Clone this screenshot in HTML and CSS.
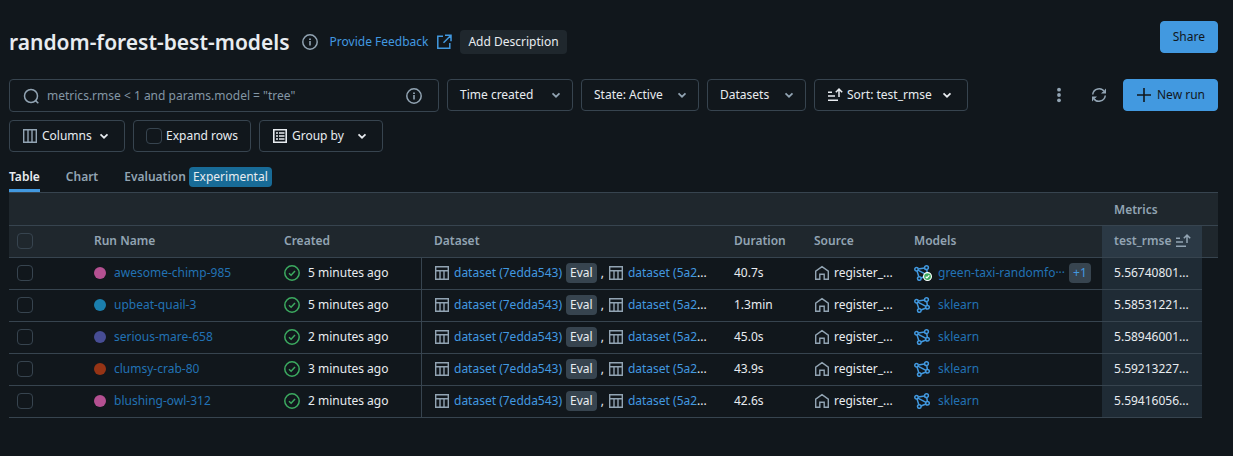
FILE: index.html
```html
<!DOCTYPE html>
<html lang="en">
<head>
<meta charset="utf-8">
<title>random-forest-best-models</title>
<link rel="stylesheet" href="styles.css">
</head>
<body>
<svg class="sprite" aria-hidden="true">
  <symbol id="info" viewBox="0 0 16 16"><circle cx="8" cy="8" r="7.2" fill="none" stroke="currentColor" stroke-width="1.5"/><path d="M7.2 7h1.6v4.5H7.2zM7.1 4.4h1.8v1.6H7.1z" fill="currentColor"/></symbol>
  <symbol id="external" viewBox="0 0 16 16"><path d="M7 2.2H1.8v12h12V9M9 1.2h6v6M15 1.2L7.5 8.7" fill="none" stroke="currentColor" stroke-width="1.5"/></symbol>
  <symbol id="search" viewBox="0 0 16 16"><circle cx="8" cy="8" r="6.5" fill="none" stroke="currentColor" stroke-width="1.5"/><path d="M12.4 12.4L15.3 15.3" stroke="currentColor" stroke-width="1.5"/></symbol>
  <symbol id="chevron" viewBox="0 0 16 16"><path d="M4.5 6.3L8 9.7l3.500-3.400" fill="none" stroke="currentColor" stroke-width="1.7"/></symbol>
  <symbol id="sort" viewBox="0 0 16 16"><path d="M1 5.200h4M1 9h7M1 13.300h10M12 10V2.200M8.800 5.300L12 2.100l3.200 3.200" fill="none" stroke="currentColor" stroke-width="1.5"/></symbol>
  <symbol id="columns" viewBox="0 0 16 16"><path d="M1.700 1.700h12.600v12.600H1.700zM6 1.700v12.600M10 1.700v12.600" fill="none" stroke="currentColor" stroke-width="1.400"/></symbol>
  <symbol id="list" viewBox="0 0 16 16"><path d="M1.800 1.800h12.400v12.400H1.800z" fill="none" stroke="currentColor" stroke-width="1.600"/><path d="M4 5h2M7 5h5.500M4 8h2M7 8h5.500M4 11h2M7 11h5.500" stroke="currentColor" stroke-width="1.500"/></symbol>
  <symbol id="dots" viewBox="0 0 16 16"><circle cx="8" cy="2.700" r="1.900" fill="currentColor"/><circle cx="8" cy="8" r="1.900" fill="currentColor"/><circle cx="8" cy="13.300" r="1.900" fill="currentColor"/></symbol>
  <symbol id="refresh" viewBox="0 0 16 16"><path d="M1.700 7.500A6.400 6.400 0 0 1 13.600 5M14.300 8.500A6.400 6.400 0 0 1 2.400 11" fill="none" stroke="currentColor" stroke-width="1.500"/><path d="M15 1.500v5h-5l1.500-1.500h2V3zM1 14.500v-5h5L4.500 11h-2v2z" fill="currentColor"/></symbol>
  <symbol id="plus" viewBox="0 0 16 16"><path d="M8 1v14M1 8h14" stroke="currentColor" stroke-width="1.600"/></symbol>
  <symbol id="check" viewBox="0 0 16 16"><circle cx="8" cy="8" r="7.200" fill="none" stroke="currentColor" stroke-width="1.500"/><path d="M5 8.200l2.100 2L11 6" fill="none" stroke="currentColor" stroke-width="1.500"/></symbol>
  <symbol id="table" viewBox="0 0 16 16"><path d="M1.700 1.700h12.600v12.600H1.700zM1.700 5.700h12.600M6 5.700v8.600M10 5.700v8.600" fill="none" stroke="currentColor" stroke-width="1.400"/></symbol>
  <symbol id="home" viewBox="0 0 16 16"><path d="M1.700 14.300V6.200L8 1.600l6.300 4.600v8.100H10.200V9.200H5.800v5.100z" fill="none" stroke="currentColor" stroke-width="1.400"/></symbol>
  <symbol id="model" viewBox="0 0 16 16"><g fill="none" stroke="currentColor" stroke-width="1.500"><circle cx="2.500" cy="4.200" r="1.700"/><circle cx="12.500" cy="2.700" r="1.900"/><circle cx="13.500" cy="10.200" r="1.800"/><circle cx="5.300" cy="13.500" r="1.800"/><path d="M4.200 4l6.400-1M12.800 4.600l.500 3.800M3.900 5.200l8.100 4.200M3 5.900l1.800 5.900M7 13l4.900-2"/></g></symbol>
</svg>

<main class="page">
  <header class="header">
    <h1 class="title">random-forest-best-models</h1>
    <svg class="icon muted"><use href="#info"/></svg>
    <a class="feedback" href="#">Provide Feedback <svg class="icon"><use href="#external"/></svg></a>
    <button class="describe">Add Description</button>
    <button class="btn primary share">Share</button>
  </header>

  <div class="toolbar">
    <div class="filters">
      <label class="search">
        <svg class="icon muted"><use href="#search"/></svg>
        <input type="text" aria-label="Search runs" placeholder='metrics.rmse &lt; 1 and params.model = "tree"'>
        <svg class="icon muted"><use href="#info"/></svg>
      </label>
      <button class="btn time">Time created <svg class="icon muted"><use href="#chevron"/></svg></button>
      <button class="btn state">State: Active <svg class="icon muted"><use href="#chevron"/></svg></button>
      <button class="btn datasets">Datasets <svg class="icon muted"><use href="#chevron"/></svg></button>
      <button class="btn sort"><svg class="icon"><use href="#sort"/></svg><span class="grow">Sort: test_rmse</span><svg class="icon"><use href="#chevron"/></svg></button>
      <button class="btn cols"><svg class="icon muted"><use href="#columns"/></svg><span class="grow">Columns</span><svg class="icon"><use href="#chevron"/></svg></button>
      <label class="btn expand"><input class="tick" type="checkbox"><span>Expand rows</span></label>
      <button class="btn group"><svg class="icon"><use href="#list"/></svg><span class="grow">Group by</span><svg class="icon"><use href="#chevron"/></svg></button>
    </div>
    <div class="actions">
      <button class="bare" aria-label="More"><svg class="icon"><use href="#dots"/></svg></button>
      <button class="bare" aria-label="Refresh"><svg class="icon"><use href="#refresh"/></svg></button>
      <button class="btn primary new"><svg class="icon"><use href="#plus"/></svg>New run</button>
    </div>
  </div>

  <nav class="tabs">
    <a class="tab active" href="#">Table</a>
    <a class="tab" href="#">Chart</a>
    <a class="tab" href="#">Evaluation <span class="badge">Experimental</span></a>
  </nav>

  <table class="runs">
    <colgroup><col class="c-check"><col class="c-name"><col class="c-created"><col class="c-dataset"><col class="c-duration"><col class="c-source"><col class="c-models"><col class="c-metric"><col></colgroup>
    <thead>
      <tr class="groups"><th colspan="7"></th><th colspan="2">Metrics</th></tr>
      <tr>
        <th class="pick"><input class="tick" type="checkbox" aria-label="Select all"></th>
        <th>Run Name</th><th>Created</th><th>Dataset</th><th>Duration</th><th>Source</th><th>Models</th>
        <th class="metric"><span class="cell sorted">test_rmse <svg class="icon"><use href="#sort"/></svg></span></th><th></th>
      </tr>
    </thead>
    <tbody>
      <tr>
        <td class="pick"><input class="tick" type="checkbox" aria-label="Select awesome-chimp-985"></td>
        <td><span class="cell name"><i class="dot pink"></i><a href="#">awesome-chimp-985</a></span></td>
        <td class="created"><span class="cell"><svg class="icon ok"><use href="#check"/></svg>5 minutes ago</span></td>
        <td><span class="cell data"><svg class="icon muted"><use href="#table"/></svg><a href="#">dataset (7edda543)</a><b class="tag">Eval</b><span>,</span><svg class="icon muted"><use href="#table"/></svg><span><a href="#">dataset (5a2</a>...</span></span></td>
        <td>40.7s</td>
        <td><span class="cell source"><svg class="icon muted"><use href="#home"/></svg>register_...</span></td>
        <td><span class="cell model"><span class="mark"><svg class="icon"><use href="#model"/></svg><svg class="seal" viewBox="0 0 8 8"><circle cx="4" cy="4" r="3.500" fill="#3caa60" stroke="#fff"/><path d="M2.400 4.200l1.100 1 2.100-2.300" fill="none" stroke="#fff"/></svg></span><a href="#">green-taxi-randomfo···</a><button class="more">+1</button></span></td>
        <td class="metric">5.56740801...</td><td class="rest"></td>
      </tr>
      <tr>
        <td class="pick"><input class="tick" type="checkbox" aria-label="Select upbeat-quail-3"></td>
        <td><span class="cell name"><i class="dot teal"></i><a href="#">upbeat-quail-3</a></span></td>
        <td class="created"><span class="cell"><svg class="icon ok"><use href="#check"/></svg>5 minutes ago</span></td>
        <td><span class="cell data"><svg class="icon muted"><use href="#table"/></svg><a href="#">dataset (7edda543)</a><b class="tag">Eval</b><span>,</span><svg class="icon muted"><use href="#table"/></svg><span><a href="#">dataset (5a2</a>...</span></span></td>
        <td>1.3min</td>
        <td><span class="cell source"><svg class="icon muted"><use href="#home"/></svg>register_...</span></td>
        <td><span class="cell model"><svg class="icon"><use href="#model"/></svg><a href="#">sklearn</a></span></td>
        <td class="metric">5.58531221...</td><td class="rest"></td>
      </tr>
      <tr>
        <td class="pick"><input class="tick" type="checkbox" aria-label="Select serious-mare-658"></td>
        <td><span class="cell name"><i class="dot indigo"></i><a href="#">serious-mare-658</a></span></td>
        <td class="created"><span class="cell"><svg class="icon ok"><use href="#check"/></svg>2 minutes ago</span></td>
        <td><span class="cell data"><svg class="icon muted"><use href="#table"/></svg><a href="#">dataset (7edda543)</a><b class="tag">Eval</b><span>,</span><svg class="icon muted"><use href="#table"/></svg><span><a href="#">dataset (5a2</a>...</span></span></td>
        <td>45.0s</td>
        <td><span class="cell source"><svg class="icon muted"><use href="#home"/></svg>register_...</span></td>
        <td><span class="cell model"><svg class="icon"><use href="#model"/></svg><a href="#">sklearn</a></span></td>
        <td class="metric">5.58946001...</td><td class="rest"></td>
      </tr>
      <tr>
        <td class="pick"><input class="tick" type="checkbox" aria-label="Select clumsy-crab-80"></td>
        <td><span class="cell name"><i class="dot rust"></i><a href="#">clumsy-crab-80</a></span></td>
        <td class="created"><span class="cell"><svg class="icon ok"><use href="#check"/></svg>3 minutes ago</span></td>
        <td><span class="cell data"><svg class="icon muted"><use href="#table"/></svg><a href="#">dataset (7edda543)</a><b class="tag">Eval</b><span>,</span><svg class="icon muted"><use href="#table"/></svg><span><a href="#">dataset (5a2</a>...</span></span></td>
        <td>43.9s</td>
        <td><span class="cell source"><svg class="icon muted"><use href="#home"/></svg>register_...</span></td>
        <td><span class="cell model"><svg class="icon"><use href="#model"/></svg><a href="#">sklearn</a></span></td>
        <td class="metric">5.59213227...</td><td class="rest"></td>
      </tr>
      <tr>
        <td class="pick"><input class="tick" type="checkbox" aria-label="Select blushing-owl-312"></td>
        <td><span class="cell name"><i class="dot pink"></i><a href="#">blushing-owl-312</a></span></td>
        <td class="created"><span class="cell"><svg class="icon ok"><use href="#check"/></svg>2 minutes ago</span></td>
        <td><span class="cell data"><svg class="icon muted"><use href="#table"/></svg><a href="#">dataset (7edda543)</a><b class="tag">Eval</b><span>,</span><svg class="icon muted"><use href="#table"/></svg><span><a href="#">dataset (5a2</a>...</span></span></td>
        <td>42.6s</td>
        <td><span class="cell source"><svg class="icon muted"><use href="#home"/></svg>register_...</span></td>
        <td><span class="cell model"><svg class="icon"><use href="#model"/></svg><a href="#">sklearn</a></span></td>
        <td class="metric">5.59416056...</td><td class="rest"></td>
      </tr>
    </tbody>
  </table>
</main>
</body>
</html>
```

FILE: styles.css
```css
* { box-sizing: border-box; }

body {
  margin: 0;
  background: #11171c;
  color: #e8ecf0;
  font: 12px/20px "Segoe UI", "Noto Sans", sans-serif;
}

.sprite { display: none; }
a { color: #4299e0; text-decoration: none; }
button, input { font: inherit; color: inherit; }
.icon { width: 16px; height: 16px; flex: none; display: block; }
.muted { color: #92a4b3; }

.page { padding: 21px 15px 0 9px; }

.header { display: flex; align-items: center; height: 41px; }
.title { margin: 0 12px 0 0; font-size: 21px; line-height: 28px; font-weight: 600; }
.feedback { display: flex; align-items: center; gap: 8px; margin: 0 8px 0 12px; }
.describe {
  height: 24px;
  padding: 0 8px;
  border: 0;
  border-radius: 4px;
  background: #1f272d;
}

.btn {
  display: flex;
  align-items: center;
  justify-content: space-between;
  height: 32px;
  padding: 0 12px;
  border: 1px solid #37444f;
  border-radius: 4px;
  background: transparent;
  white-space: nowrap;
}
.primary { background: #4299e0; border-color: #4299e0; color: #11171c; }
.share { margin: 0 0 9px auto; }

.toolbar { display: flex; justify-content: space-between; margin-top: 17px; }
.filters { flex: 1; max-width: 1000px; display: flex; flex-wrap: wrap; gap: 8px; }
.search {
  display: flex;
  align-items: center;
  gap: 8px;
  width: 430px;
  height: 33px;
  padding: 0 16px 0 13px;
  border: 1px solid #37444f;
  border-radius: 4px;
}
.search input { flex: 1; min-width: 0; padding: 0; border: 0; outline: 0; background: transparent; }
.search input::placeholder { color: #8396a5; opacity: 1; }
.time { width: 126px; padding-right: 8px; }
.state { width: 118px; padding-right: 8px; }
.datasets { width: 99px; padding-right: 8px; }
.sort { width: 154px; gap: 4px; }
.cols { width: 116px; gap: 4px; }
.group { width: 124px; gap: 4px; }
.expand { gap: 4px; }
.grow { flex: 1; text-align: left; }

.actions { display: flex; gap: 8px; align-items: flex-start; }
.bare {
  display: flex;
  align-items: center;
  justify-content: center;
  width: 32px;
  height: 32px;
  padding: 0;
  border: 0;
  background: transparent;
  color: #92a4b3;
}
.new { width: 95px; gap: 4px; }

.tick {
  appearance: none;
  display: block;
  flex: none;
  width: 16px;
  height: 16px;
  margin: 0;
  border: 1px solid #37444f;
  border-radius: 4px;
}

.tabs { display: flex; gap: 26px; margin-top: 12px; }
.tab {
  display: flex;
  align-items: center;
  gap: 3px;
  height: 28px;
  border-bottom: 3px solid transparent;
  color: #92a4b3;
  font-weight: 600;
}
.active { color: #e8ecf0; border-color: #4299e0; }
.badge { padding: 0 4px; border-radius: 4px; background: #186b97; color: #e8ecf0; font-weight: 400; }

.runs { width: 100%; table-layout: fixed; border-spacing: 0; border-top: 1px solid #37444f; }
.c-check { width: 73px; }
.c-name { width: 190px; }
.c-created { width: 150px; }
.c-dataset { width: 300px; }
.c-duration { width: 80px; }
.c-source, .c-metric { width: 100px; }
.c-models { width: 200px; }

th, td { height: 32px; padding: 0 12px 1px; border-bottom: 1px solid #37444f; text-align: left; white-space: nowrap; }
th { background: #1f272d; color: #92a4b3; font-weight: 600; }
.groups th { height: 33px; padding: 2px 12px 0; }
.pick { padding: 0 8px 1px; }
.created { border-right: 1px solid #37444f; }
.rest { border: 0; }
th.metric { background: #2b3945; }
td.metric { background: #1f2b35; }

.cell { display: flex; align-items: center; gap: 8px; }
.dot { width: 12px; height: 12px; border-radius: 50%; }
.pink { background: #b45091; }
.teal { background: #1b7fae; }
.indigo { background: #474d94; }
.rust { background: #963415; }
.name a, .model a { color: #2272b4; }
.ok { color: #3caa60; }
.data, .source, .sorted { gap: 4px; }
.tag, .more { padding: 0 4px; border: 0; border-radius: 4px; background: #37444f; font-weight: 400; }
.model .icon { color: #4299e0; }
.mark { position: relative; }
.seal { position: absolute; right: -2px; bottom: 0; width: 9px; height: 9px; }
.more { flex: none; margin-left: -4px; color: #4299e0; }
```
